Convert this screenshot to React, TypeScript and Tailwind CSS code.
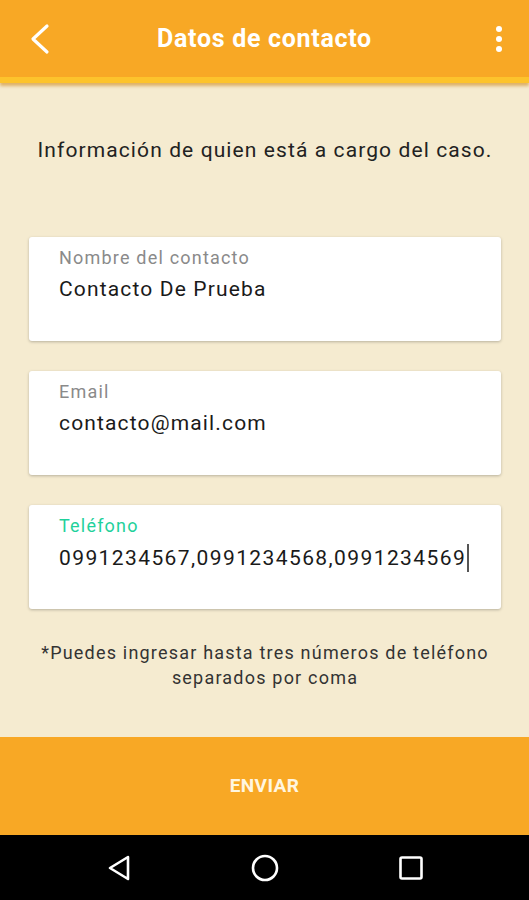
import { useState } from "react";

function Field({ label, value, active }: { label: string; value: string; active?: boolean }) {
  return (
    <div className="h-[104px] rounded-[3px] bg-white pl-[30px] pt-[9px] shadow-[0_1px_3px_rgba(0,0,0,0.25)]">
      <p
        className={`text-[18px] leading-[24px] tracking-[1.2px] ${active ? "text-[#1fd19b]" : "text-[#8a8a8a]"}`}
      >
        {label}
      </p>
      <p
        className={`mt-[6px] flex items-center text-[21px] leading-[26px] text-[#1a1a1a] ${active ? "tracking-[1.4px]" : "tracking-[1.15px]"}`}
      >
        {value}
        {active && <span className="ml-[1px] inline-block h-[28px] w-[1.5px] bg-[#555]" />}
      </p>
    </div>
  );
}

export default function App() {
  const [fields] = useState([
    { label: "Nombre del contacto", value: "Contacto De Prueba" },
    { label: "Email", value: "contacto@mail.com" },
    { label: "Teléfono", value: "0991234567,0991234568,0991234569", active: true },
  ]);

  return (
    <div className="flex h-[900px] w-[529px] flex-col bg-[#f5ebd0] font-['Roboto',sans-serif]">
      <header className="relative z-10 shrink-0 shadow-[0_3px_3px_rgba(200,120,0,0.5)]">
        <div className="flex h-[77px] items-center justify-between bg-[#f8a825] px-[27px]">
          <svg width="26" height="32" viewBox="0 0 26 32" fill="none" stroke="white" strokeWidth="3.2" strokeLinecap="round" strokeLinejoin="round">
            <path d="M20 3 L6 16 L20 29" />
          </svg>
          <h1 className="text-[25px] font-bold tracking-[0.7px] text-white">Datos de contacto</h1>
          <div className="flex w-[26px] flex-col items-end gap-[4px]">
            <span className="h-[6px] w-[6px] rounded-full bg-white" />
            <span className="h-[6px] w-[6px] rounded-full bg-white" />
            <span className="h-[6px] w-[6px] rounded-full bg-white" />
          </div>
        </div>
        <div className="h-[6px] bg-[#fdc32c]" />
      </header>

      <main className="flex flex-1 flex-col pl-[29px] pr-[28px]">
        <p className="mt-[54px] text-center text-[21px] leading-[26px] tracking-[1.1px] text-[#222]">
          Información de quien está a cargo del caso.
        </p>
        <div className="mt-[74px] flex flex-col gap-[30px]">
          {fields.map((f) => (
            <Field key={f.label} label={f.label} value={f.value} active={f.active} />
          ))}
        </div>
        <p className="mt-[31px] text-center text-[18px] leading-[25px] tracking-[1.2px] text-[#333]">
          *Puedes ingresar hasta tres números de teléfono
          <br />
          separados por coma
        </p>
      </main>

      <button className="h-[98px] shrink-0 bg-[#f8a825] text-[19px] font-bold tracking-[0.4px] text-[#fff6e0]">
        ENVIAR
      </button>

      <nav className="flex h-[65px] shrink-0 items-center justify-center gap-[118px] bg-black">
        <svg width="26" height="28" viewBox="0 0 26 28" fill="none" stroke="white" strokeWidth="2.6" strokeLinejoin="round">
          <path d="M22 3 L4 14 L22 25 Z" />
        </svg>
        <svg width="30" height="30" viewBox="0 0 30 30" fill="none" stroke="white" strokeWidth="2.6">
          <circle cx="15" cy="15" r="12" />
        </svg>
        <svg width="26" height="26" viewBox="0 0 26 26" fill="none" stroke="white" strokeWidth="2.6">
          <rect x="2.5" y="2.5" width="21" height="21" rx="1.5" />
        </svg>
      </nav>
    </div>
  );
}
